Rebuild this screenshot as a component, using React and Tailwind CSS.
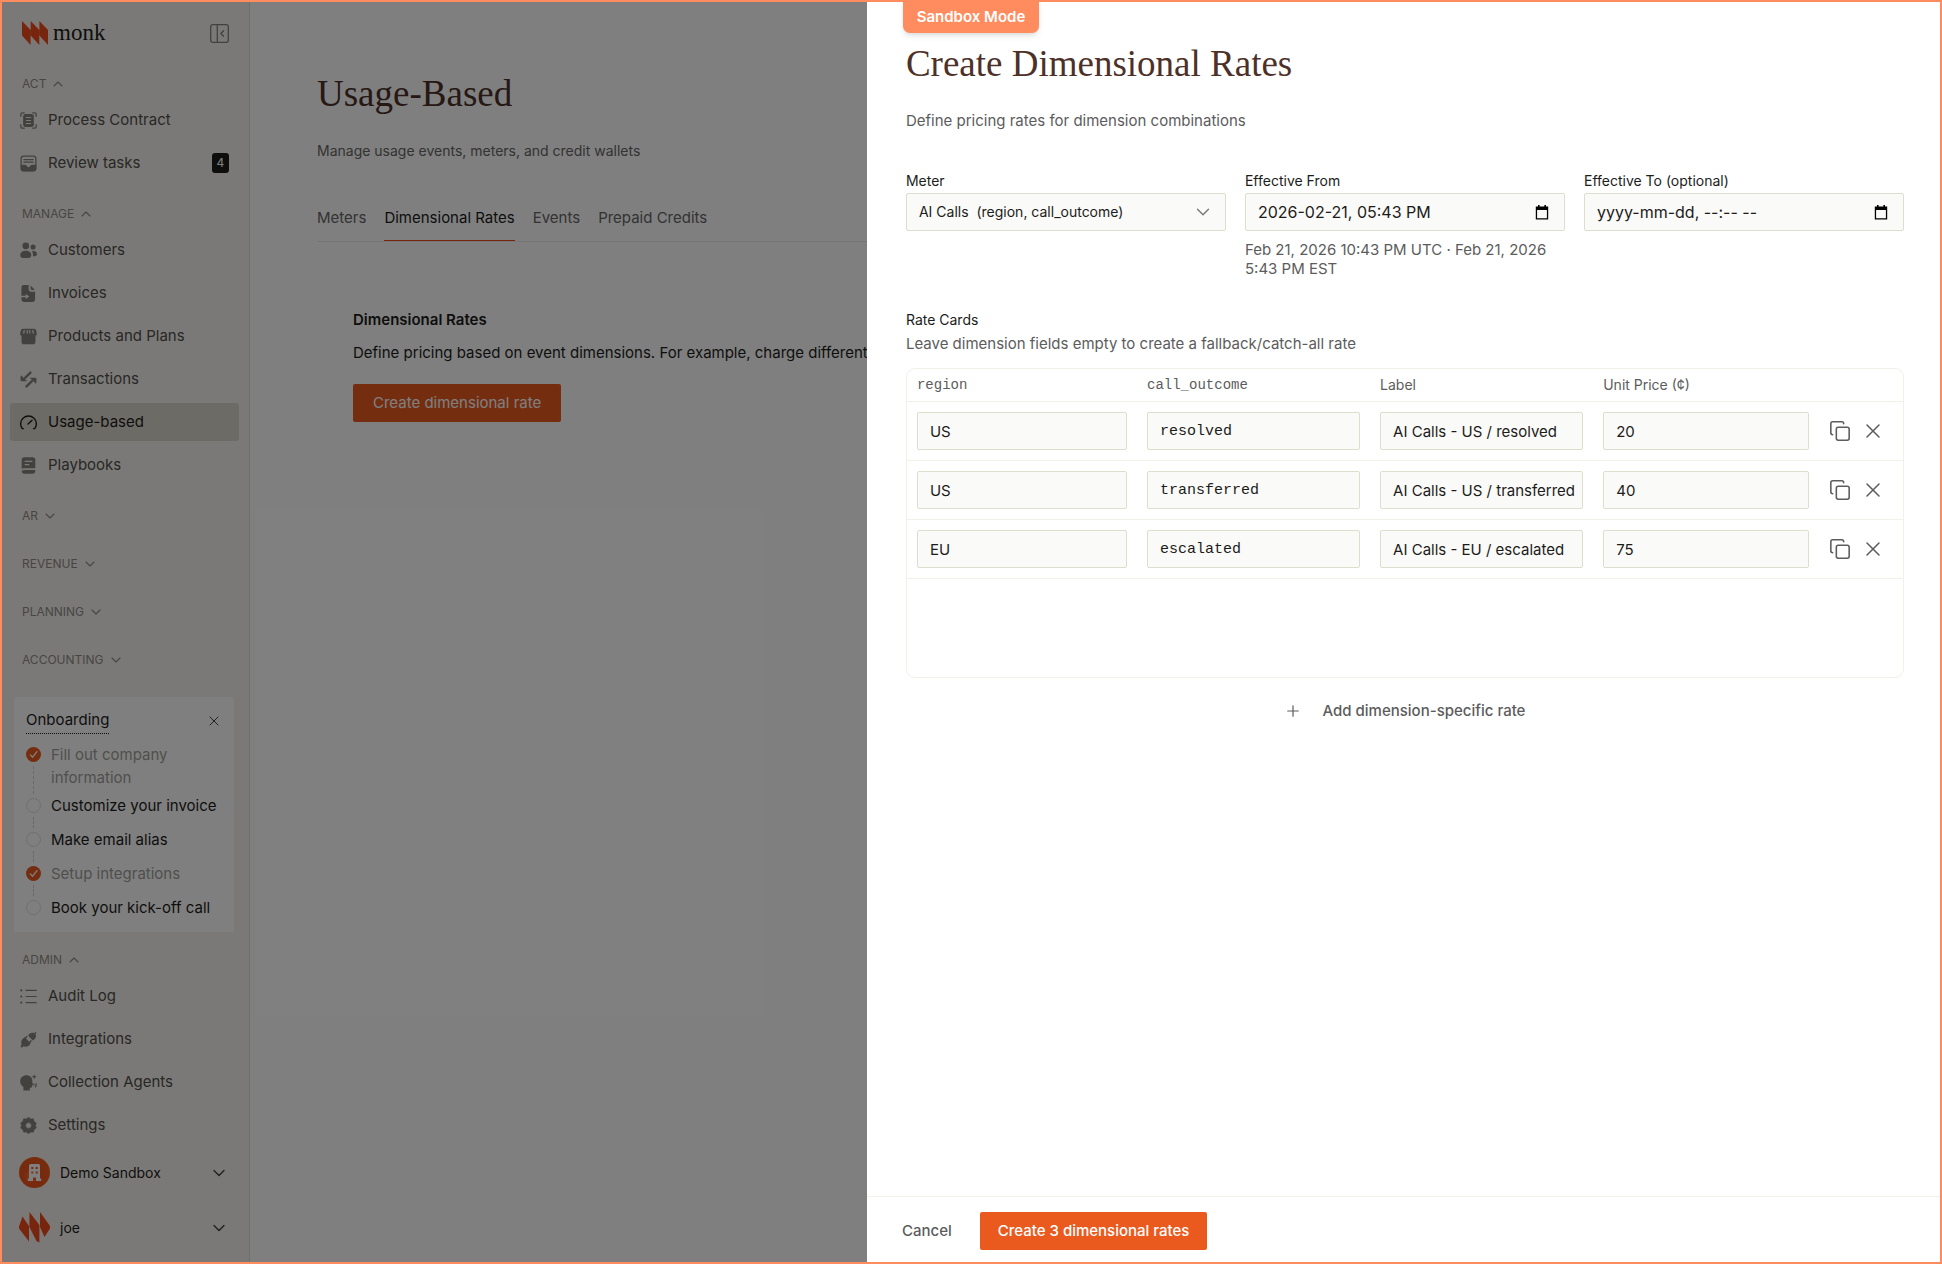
import React from "react";
import { Copy, X, Plus, ChevronDown, ChevronUp } from "lucide-react";

const glyphs = {
  scan: (
    <>
      <path d="M1 5V2.700A1.700 1.700 0 0 1 2.700 1H5M15 1h2.300A1.700 1.700 0 0 1 19 2.700V5M19 15v2.300a1.700 1.700 0 0 1-1.700 1.700H15M5 19H2.700A1.700 1.700 0 0 1 1 17.300V15" fill="none" stroke="currentColor" strokeWidth="1.500" strokeLinecap="round" />
      <path fillRule="evenodd" d="M6.500 2.300h7A2.800 2.800 0 0 1 16.300 5.100v9.800a2.800 2.800 0 0 1-2.800 2.800h-7a2.800 2.800 0 0 1-2.800-2.800V5.100A2.800 2.800 0 0 1 6.500 2.300ZM7 5.800v1.300h6V5.800ZM7 9.300v1.300h6V9.300ZM7 12.800v1.300h6v-1.300Z" />
    </>
  ),
  inbox: (
    <>
      <rect x="1.300" y="1.300" width="17.400" height="17.400" rx="3" fill="none" stroke="currentColor" strokeWidth="1.500" />
      <path d="M4.500 5.400h11M4.500 8.300h11" stroke="currentColor" strokeWidth="1.400" strokeLinecap="round" />
      <path d="M1 11.500h5.500l3.500 3.200 3.500-3.200H19V16a3 3 0 0 1-3 3H4a3 3 0 0 1-3-3Z" />
    </>
  ),
  users: (
    <>
      <circle cx="6.800" cy="4.600" r="3.900" />
      <circle cx="15.400" cy="5.800" r="3" />
      <path d="M.3 15.600C.3 12.300 3 10.300 6.800 10.300s6.500 2 6.500 5.300c0 2.200-1.400 3.100-3.100 3.100H3.400C1.700 18.700.3 17.800.3 15.600ZM14 10.800c3.200-.8 6 .8 6 3.400 0 1.700-1 2.500-2.600 2.500h-2.200c.2-2.300 0-4.300-1.200-5.900Z" />
    </>
  ),
  invoice: (
    <>
      <path d="M12.500.5 17.500 5.800h-3.200a1.800 1.800 0 0 1-1.800-1.800Z" />
      <path fillRule="evenodd" d="M4.500 0h5.700v4.800A3 3 0 0 0 13.200 7.800h4.600v9.400A2.800 2.800 0 0 1 15 20H4.500a2.800 2.800 0 0 1-2.800-2.800V14.300h5v2.200l4.300-3-4.300-3v2.200h-5V2.800A2.800 2.800 0 0 1 4.500 0Z" />
    </>
  ),
  store: (
    <path fillRule="evenodd" d="M4 .8h12c2 0 2.800.9 3.200 2.800l.6 3.100c.2 1.200-.6 2.100-1.600 2.300v7.200a3 3 0 0 1-3 3H4.800a3 3 0 0 1-3-3V9C.8 8.800 0 7.900.2 6.700l.6-3.100C1.200 1.700 2 .8 4 .8ZM4.400 2.400 3.500 6.500h1.600L5.700 2.400ZM8 2.400 7.700 6.500h1.500V2.400ZM10.800 2.400v4.100h1.500L12 2.400ZM14.300 2.400l.6 4.100h1.600l-.9-4.100Z" />
  ),
  swap: (
    <>
      <path d="M12.300 1.800 6 8M7.700 18.200 14 12" stroke="currentColor" strokeWidth="2.800" strokeLinecap="round" />
      <path d="M1.500 5.200 8.600 12H2A1.400 1.400 0 0 1 .6 10.600L.8 5.600ZM18.500 14.800 11.400 8H18a1.400 1.400 0 0 1 1.400 1.400l-.2 5Z" />
    </>
  ),
  gauge: (
    <path d="M2.700 17.200a9.200 9.200 0 1 1 14.600 0h-1.400M2.700 17.200h1.200M9.500 11.700l4.700-4.400" fill="none" stroke="currentColor" strokeWidth="1.600" strokeLinecap="round" />
  ),
  book: (
    <>
      <path fillRule="evenodd" d="M5 .3h10a3 3 0 0 1 3 3v9.900H4.600A3 3 0 0 0 2 14.400V3.300a3 3 0 0 1 3-3ZM5.500 4.300v1.500h9V4.300ZM5.500 8.200v1.500h5.500V8.200Z" />
      <path d="M4.500 15.200H18v1.700a2.800 2.800 0 0 1-2.800 2.800H4.800A2.800 2.800 0 0 1 2 17.200c0-1.100 1.200-2 2.500-2Z" />
    </>
  ),
  list: (
    <>
      <path d="M7 2.800h12.200M7 10h12.200M7 17.200h12.200" stroke="currentColor" strokeWidth="1.300" strokeLinecap="round" />
      <circle cx="1.500" cy="2.800" r="1.300" />
      <circle cx="1.500" cy="10" r="1.300" />
      <circle cx="1.500" cy="17.200" r="1.300" />
    </>
  ),
  plug: (
    <>
      <path d="M5.600 7.400 12.600 14.400c-1.800 3.700-5.200 5-8.600 3.600L2.300 19.600.5 17.800 2 16C.6 12.700 2 9.200 5.600 7.400ZM9.400 5.400c1.500-3 4.700-4.200 7.500-2.900L18.300 1l1 1-1 1.500c1.300 3 0 6-3.200 7.600Z" />
      <path d="m5.300 9.500 3.200-3.200M10.200 14.500l3.300-3.300" stroke="currentColor" strokeWidth="1.700" />
    </>
  ),
  agent: (
    <>
      <path d="M7.700 1.500c4 0 6.800 2.700 6.800 6.400v1.800c0 .8.900 1.700.9 2.300 0 .5-.9.700-.9 1.200 0 2.200-.9 3.200-2.900 3.200V19.500H4v-4.300C1.600 13.500.2 11.200.2 8.500c0-4.200 3.300-7 7.500-7Z" />
      <path d="m16.700.2.8 2.200 2.300.8-2.300.8-.8 2.300-.8-2.300-2.200-.8 2.200-.8Z" />
      <path d="M16.300 12v1M18.900 11.200c.1 1.600 0 2.800-.7 4" stroke="currentColor" strokeWidth="1.400" strokeLinecap="round" fill="none" />
    </>
  ),
  gear: (
    <path fillRule="evenodd" d="m10 .3 2.500 2 3.200-.1.900 3.100 2.600 1.800L18.100 10l1.100 2.900-2.600 1.800-.9 3.100-3.200-.1-2.500 2-2.500-2-3.200.1-.9-3.100L.8 12.900 1.900 10 .8 7.100l2.600-1.800.9-3.100 3.200.1ZM10 6.600a3.400 3.400 0 1 0 0 6.800 3.400 3.400 0 0 0 0-6.800Z" stroke="currentColor" strokeWidth=".8" strokeLinejoin="round" />
  ),
};

function Glyph({ name, className = "" }) {
  return (
    <svg viewBox="0 0 20 20" fill="currentColor" className={`size-[17px] shrink-0 ${className}`} aria-hidden="true">
      {glyphs[name]}
    </svg>
  );
}

function NavItem({ icon, label, active, badge }) {
  return (
    <li>
      <a
        href="#"
        aria-current={active ? "page" : undefined}
        className={`flex h-[38px] items-center rounded-[3px] px-[10px] text-[15px] ${active ? "bg-[#dad7cc] text-[#1c1c1a]" : "text-[#50504c]"}`}
      >
        <Glyph name={icon} className={active ? "text-[#1c1c1a]" : "text-[#84837d]"} />
        <span className="ml-[11px] grow">{label}</span>
        {badge && (
          <span className="flex h-5 w-[17px] items-center justify-center rounded-[3px] bg-[#1c1c1a] text-xs text-white">{badge}</span>
        )}
      </a>
    </li>
  );
}

function Section({ title, open, items = [] }) {
  const Chevron = open ? ChevronUp : ChevronDown;
  return (
    <section>
      <button type="button" aria-expanded={!!open} className="ml-3 flex h-[17px] items-center gap-1 text-xs text-[#8e8c87]">
        {title}
        <Chevron className="size-4" strokeWidth={1.600} />
      </button>
      {open && (
        <ul className="mt-[9px] flex flex-col gap-[5px]">
          {items.map((item) => (
            <NavItem key={item.label} {...item} />
          ))}
        </ul>
      )}
    </section>
  );
}

const steps = [
  { label: "Fill out company information", done: true },
  { label: "Customize your invoice" },
  { label: "Make email alias" },
  { label: "Setup integrations", done: true },
  { label: "Book your kick-off call" },
];

function Onboarding() {
  return (
    <section className="mr-[5px] ml-1 mt-[29px] rounded-[3px] bg-white px-3 pt-[11px] pb-1">
      <div className="flex items-start justify-between">
        <h2 className="border-b border-dotted border-[#1c1c1a] pb-px text-[15px] leading-6 text-[#1c1c1a]">Onboarding</h2>
        <button type="button" aria-label="Close onboarding" className="flex h-[26px] items-center text-[#444]">
          <X className="size-4" strokeWidth={1.500} />
        </button>
      </div>
      <ul className="mt-[13px]">
        {steps.map((step, i) => (
          <li key={step.label} className="flex gap-[10px]">
            <div className="flex flex-col items-center">
              {step.done ? (
                <svg viewBox="0 0 15 15" className="size-[15px] shrink-0" aria-hidden="true">
                  <circle cx="7.500" cy="7.500" r="7.500" fill="#ea5a1f" />
                  <path d="m4.300 7.900 2.200 2.300 4.500-5.600" fill="none" stroke="#fff" strokeWidth="1.300" strokeLinecap="round" />
                </svg>
              ) : (
                <span className="size-[15px] shrink-0 rounded-full border border-[#e2e0d6]" />
              )}
              {i < steps.length - 1 && <span className="my-1 min-h-[11px] grow border-l border-dashed border-[#d4d2c8]" />}
            </div>
            <span className={`-mt-1 pb-[9px] text-[15px] leading-[23px] ${step.done ? "text-[#a09f9a]" : "text-[#1c1c1a]"}`}>{step.label}</span>
          </li>
        ))}
      </ul>
    </section>
  );
}

function Mark({ className, fill }) {
  return (
    <svg viewBox="0 0 26 24" className={className} fill={fill} aria-hidden="true">
      <path d="M0 0 8.600 9V24L0 14.500ZM8.700 0l8.600 9V24L8.700 14.500ZM17.400 0 26 9V24l-8.600-9.500Z" />
    </svg>
  );
}

function Sidebar() {
  return (
    <aside className="flex w-[248px] shrink-0 flex-col border-r border-[#dfddd6] bg-[#f6f3ee] pr-[10px] pb-4 pl-2">
      <div className="flex items-center justify-between pt-[15px] pr-[10px] pl-3">
        <a href="#" className="flex items-center gap-[5px]">
          <Mark className="h-6 w-[26px]" fill="#f04a1d" />
          <span className="font-['Liberation_Serif'] text-[23px] leading-8 text-[#1c1c1a]">monk</span>
        </a>
        <button type="button" aria-label="Collapse sidebar" className="text-[#84837d]">
          <svg viewBox="0 0 19 19" className="size-[19px]" fill="none" stroke="currentColor" strokeWidth="1.300" strokeLinecap="round" strokeLinejoin="round">
            <rect x=".7" y=".7" width="17.600" height="17.600" rx="2" />
            <path d="M7.300.7v17.600M13.600 6.700 10.900 9.500l2.700 2.800" />
          </svg>
        </button>
      </div>
      <nav className="mt-[26px] flex flex-col">
        <Section title="ACT" open items={[{ icon: "scan", label: "Process Contract" }, { icon: "inbox", label: "Review tasks", badge: "4" }]} />
        <div className="mt-[23px]">
          <Section
            title="MANAGE"
            open
            items={[
              { icon: "users", label: "Customers" },
              { icon: "invoice", label: "Invoices" },
              { icon: "store", label: "Products and Plans" },
              { icon: "swap", label: "Transactions" },
              { icon: "gauge", label: "Usage-based", active: true },
              { icon: "book", label: "Playbooks" },
            ]}
          />
        </div>
        <div className="mt-[23px] flex flex-col gap-[31px]">
          <Section title="AR" />
          <Section title="REVENUE" />
          <Section title="PLANNING" />
          <Section title="ACCOUNTING" />
        </div>
      </nav>
      <Onboarding />
      <nav className="mt-[19px]">
        <Section
          title="ADMIN"
          open
          items={[
            { icon: "list", label: "Audit Log" },
            { icon: "plug", label: "Integrations" },
            { icon: "agent", label: "Collection Agents" },
            { icon: "gear", label: "Settings" },
          ]}
        />
      </nav>
      <button type="button" className="mt-[13px] flex h-[31px] items-center pr-[10px] pl-[9px] text-sm text-[#1c1c1a]">
        <svg viewBox="0 0 31 31" className="size-[31px]" aria-hidden="true">
          <defs>
            <radialGradient id="org" cx=".4" cy=".6">
              <stop offset="0" stopColor="#ff7a2a" />
              <stop offset=".5" stopColor="#f0521d" />
              <stop offset="1" stopColor="#ee5a1a" />
            </radialGradient>
          </defs>
          <circle cx="15.500" cy="15.500" r="15.500" fill="url(#org)" />
          <path fillRule="evenodd" fill="#fff" d="M11.500 7h8a1.500 1.500 0 0 1 1.500 1.500V21.500h1.200V24H17v-3.500h-3V24H8.800V21.500H10V8.500A1.500 1.500 0 0 1 11.500 7ZM12.300 10v2h2v-2ZM16.700 10v2h2v-2ZM12.300 14.500v2h2v-2ZM16.700 14.500v2h2v-2Z" />
        </svg>
        <span className="ml-[10px] grow text-left">Demo Sandbox</span>
        <ChevronDown className="size-5 text-[#444]" strokeWidth={1.700} />
      </button>
      <button type="button" className="mt-6 flex h-[31px] items-center pr-[10px] pl-[9px] text-sm text-[#1c1c1a]">
        <svg viewBox="0 0 31 31" className="size-[31px]" fill="#f04a1d" aria-hidden="true">
          <path d="M3.500 4.500 10 14v15.500L0 16.500v-2ZM10.400 0l10 13v17.500L17.500 29l-7.100-14ZM21 0 31 14v2.500L25.500 25 21 15Z" />
        </svg>
        <span className="ml-[10px] grow text-left">joe</span>
        <ChevronDown className="size-5 text-[#444]" strokeWidth={1.700} />
      </button>
    </aside>
  );
}

const tabs = ["Meters", "Dimensional Rates", "Events", "Prepaid Credits"];

function Main() {
  return (
    <main className="min-w-0 grow overflow-hidden bg-white pt-[66px] pl-[67px]">
      <h1 className="font-['Liberation_Serif'] text-[37px] leading-[52px] text-[#4d3129]">Usage-Based</h1>
      <p className="mt-5 text-sm leading-[22px] text-[#666]">Manage usage events, meters, and credit wallets</p>
      <div role="tablist" className="mt-[43px] flex gap-[18px] border-b border-[#ececec]">
        {tabs.map((tab) => (
          <button
            key={tab}
            type="button"
            role="tab"
            aria-selected={tab === "Dimensional Rates"}
            className={`h-[36px] border-b pb-[9px] text-[15px] leading-6 ${tab === "Dimensional Rates" ? "border-[#f04a1d] text-[#1c1c1a]" : "border-transparent text-[#666]"}`}
          >
            {tab}
          </button>
        ))}
      </div>
      <section className="pt-[68px] pl-9 text-[#1c1c1a]">
        <h2 className="text-[15px] leading-5 font-semibold">Dimensional Rates</h2>
        <p className="mt-3 text-[15px] leading-[22px] whitespace-nowrap">Define pricing based on event dimensions. For example, charge different</p>
        <button type="button" className="mt-5 h-[38px] rounded-[2px] bg-[#ea5a1f] px-5 text-[15px] text-white">Create dimensional rate</button>
      </section>
    </main>
  );
}

const fieldClass = "h-[38px] w-full rounded-[2px] border border-[#dedece] bg-[#fafaf8] pr-1 pl-3 text-[#1c1c1a] outline-none placeholder:text-[#1c1c1a]";

function CalendarIcon() {
  return (
    <svg viewBox="0 0 14 15" className="h-[15px] w-[14px]" aria-hidden="true">
      <path fillRule="evenodd" d="M3 0h1.600v1.500h4.800V0H11v1.500h2.200V14.500H.8V1.500H3ZM2.100 5v8.200h9.800V5Z" />
    </svg>
  );
}

function DateField({ id, label, note, ...rest }) {
  return (
    <div>
      <label htmlFor={id} className="block text-sm leading-6">{label}</label>
      <div className="relative">
        <input id={id} type="text" className={`${fieldClass} text-base`} {...rest} />
        <button type="button" aria-label={`Pick ${label}`} className="absolute inset-y-0 right-4">
          <CalendarIcon />
        </button>
      </div>
      {note && <p className="mt-[9px] text-[15px] leading-[19px] text-[#5c5c5c]">{note}</p>}
    </div>
  );
}

const rates = [
  { region: "US", outcome: "resolved", label: "AI Calls - US / resolved", price: "20" },
  { region: "US", outcome: "transferred", label: "AI Calls - US / transferred", price: "40" },
  { region: "EU", outcome: "escalated", label: "AI Calls - EU / escalated", price: "75" },
];

function RateTable() {
  const cell = "border-b border-[#f1f1ea] px-[10px]";
  return (
    <div className="mt-3 min-h-[310px] rounded-[9px] border border-[#f1f1ea]">
      <table className="w-full table-fixed border-separate border-spacing-0 text-left">
        <colgroup>
          <col className="w-[23.1%]" />
          <col className="w-[23.4%]" />
          <col className="w-[22.4%]" />
          <col className="w-[22.7%]" />
          <col />
        </colgroup>
        <thead>
          <tr className="h-[33px] text-sm text-[#5c5c5c]">
            <th scope="col" className={`${cell} font-['Liberation_Mono'] font-normal`}>region</th>
            <th scope="col" className={`${cell} font-['Liberation_Mono'] font-normal`}>call_outcome</th>
            <th scope="col" className={`${cell} font-normal`}>Label</th>
            <th scope="col" className={`${cell} font-normal`}>Unit Price (¢)</th>
            <th scope="col" aria-label="Actions" className={cell} />
          </tr>
        </thead>
        <tbody>
          {rates.map((rate) => (
            <tr key={rate.label} className="h-[59px]">
              <td className={cell}><input aria-label="region" defaultValue={rate.region} className={`${fieldClass} text-[15px]`} /></td>
              <td className={cell}><input aria-label="call_outcome" defaultValue={rate.outcome} className={`${fieldClass} font-['Liberation_Mono'] text-[15px]`} /></td>
              <td className={cell}><input aria-label="Label" defaultValue={rate.label} className={`${fieldClass} text-[15px]`} /></td>
              <td className={cell}><input aria-label="Unit Price (¢)" inputMode="decimal" defaultValue={rate.price} className={`${fieldClass} text-[15px]`} /></td>
              <td className={cell}>
                <div className="flex items-center gap-[10px] text-[#5c5c5c]">
                  <button type="button" aria-label="Duplicate rate"><Copy className="size-[22px]" strokeWidth={1.700} /></button>
                  <button type="button" aria-label="Remove rate"><X className="size-6" strokeWidth={1.500} /></button>
                </div>
              </td>
            </tr>
          ))}
        </tbody>
      </table>
    </div>
  );
}

function Panel() {
  return (
    <div role="dialog" aria-labelledby="panel-title" className="flex w-[55.37%] flex-col bg-white text-[#1c1c1a]">
      <div className="grow pt-9 pr-9 pl-[39px]">
        <h2 id="panel-title" className="font-['Liberation_Serif'] text-[37px] leading-[52px] text-[#4d3129]">Create Dimensional Rates</h2>
        <p className="mt-5 text-[15px] leading-[22px] text-[#5c5c5c]">Define pricing rates for dimension combinations</p>
        <div className="mt-[37px] grid grid-cols-3 gap-[19px]">
          <div>
            <label htmlFor="meter" className="block text-sm leading-6">Meter</label>
            <div className="relative">
              <select id="meter" className={`${fieldClass} appearance-none text-sm`}>
                <option>{"AI Calls \u00a0(region, call_outcome)"}</option>
              </select>
              <ChevronDown className="pointer-events-none absolute top-2 right-3 size-[22px] text-[#777]" strokeWidth={1.500} />
            </div>
          </div>
          <DateField id="from" label="Effective From" defaultValue="2026-02-21, 05:43 PM" note="Feb 21, 2026 10:43 PM UTC · Feb 21, 2026 5:43 PM EST" />
          <DateField id="to" label="Effective To (optional)" placeholder="yyyy-mm-dd, --:-- --" />
        </div>
        <h3 className="mt-[30px] text-sm leading-6">Rate Cards</h3>
        <p className="text-[15px] leading-6 text-[#5c5c5c]">Leave dimension fields empty to create a fallback/catch-all rate</p>
        <RateTable />
        <div className="mt-[14px] flex justify-center">
          <button type="button" className="flex h-[38px] items-center gap-[20px] text-[15px] font-medium text-[#5c5c5c]">
            <Plus className="size-[18px]" strokeWidth={1.600} />
            Add dimension-specific rate
          </button>
        </div>
      </div>
      <footer className="flex h-[66px] items-center gap-[9px] border-t border-[#f1f1ea] pt-[3px] pl-4">
        <button type="button" className="h-[38px] px-[19px] text-[15px] font-medium text-[#5c5c5c]">Cancel</button>
        <button type="button" className="h-[38px] rounded-[2px] bg-[#ea5a1f] px-[18px] text-[15px] font-medium text-white">Create 3 dimensional rates</button>
      </footer>
    </div>
  );
}

export default function App() {
  return (
    <div className="relative flex min-h-screen border-2 border-[#ff8c5f] font-['Inter',sans-serif]">
      <Sidebar />
      <Main />
      <div className="absolute inset-0 flex justify-end bg-black/50">
        <Panel />
      </div>
      <div className="absolute inset-x-0 -top-0.5 flex justify-center">
        <span className="h-[33px] rounded-b-[7px] bg-[#ff8c5f] px-[14px] text-[15px] leading-[33px] font-semibold text-white shadow-md">Sandbox Mode</span>
      </div>
    </div>
  );
}
